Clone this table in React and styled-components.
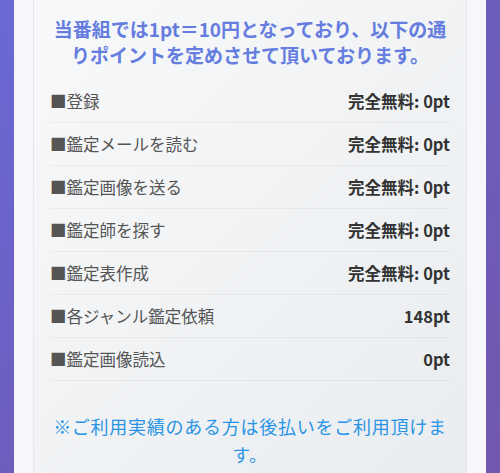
import React from "react";
import styled, { createGlobalStyle } from "styled-components";

const GlobalStyle = createGlobalStyle`
  html, body {
    margin: 0;
    padding: 0;
    height: 100%;
    overflow: hidden;
  }
  body {
    font-family: "Noto Sans CJK JP", "Noto Sans", sans-serif;
  }
`;

const Page = styled.div`
  min-height: 100vh;
  box-sizing: border-box;
  padding: 0 14px;
  background: linear-gradient(135deg, #6969d6 0%, #6d5dbc 50%, #7257ae 100%);
  display: flex;
`;

const Panel = styled.div`
  flex: 1;
  background: #f7f7fb;
  padding: 0 19px;
  display: flex;
  flex-direction: column;
`;

const Card = styled.section`
  margin-top: -20px;
  padding: 35px 16px 40px;
  border: 1px solid #e6e8ec;
  border-radius: 12px;
  background: linear-gradient(135deg, #f8f9fa 0%, #e9ecef 100%);
`;

const Lead = styled.p`
  margin: 0 0 12px;
  text-align: center;
  color: #647ddf;
  font-size: 19px;
  font-weight: 700;
  line-height: 26px;
`;

const List = styled.ul`
  list-style: none;
  margin: 0;
  padding: 0;
`;

const Row = styled.li`
  display: flex;
  justify-content: space-between;
  align-items: center;
  padding: 10px 0;
  line-height: 22px;
  font-size: 16.5px;
  border-bottom: 1px solid rgba(0, 0, 0, 0.045);
`;

const Label = styled.span`
  color: #555;
`;

const Value = styled.span`
  color: #333;
  font-weight: 700;
`;

const Note = styled.p`
  margin: 31px 0 0;
  text-align: center;
  color: #2a94e6;
  font-size: 18px;
  line-height: 28px;
  letter-spacing: 0.75px;
`;

const rows = [
  ["■登録", "完全無料: 0pt"],
  ["■鑑定メールを読む", "完全無料: 0pt"],
  ["■鑑定画像を送る", "完全無料: 0pt"],
  ["■鑑定師を探す", "完全無料: 0pt"],
  ["■鑑定表作成", "完全無料: 0pt"],
  ["■各ジャンル鑑定依頼", "148pt"],
  ["■鑑定画像読込", "0pt"],
];

export default function App() {
  return (
    <>
      <GlobalStyle />
      <Page>
        <Panel>
          <Card>
            <Lead>
              当番組では1pt＝10円となっており、以下の通りポイントを定めさせて頂いております。
            </Lead>
            <List>
              {rows.map(([label, value], i) => (
                <Row key={i}>
                  <Label>{label}</Label>
                  <Value>{value}</Value>
                </Row>
              ))}
            </List>
            <Note>※ご利用実績のある方は後払いをご利用頂けます。</Note>
          </Card>
        </Panel>
      </Page>
    </>
  );
}
